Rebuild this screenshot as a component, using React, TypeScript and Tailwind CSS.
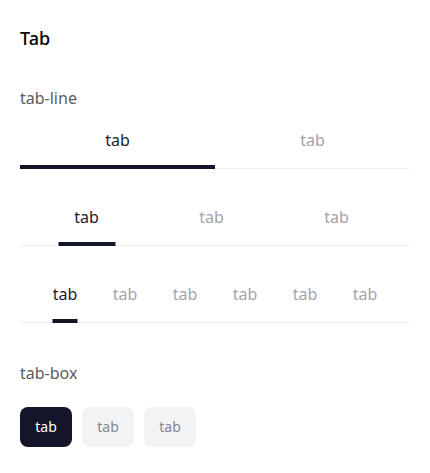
import { useState } from "react";

const font = { fontFamily: '"Noto Sans", "Open Sans", sans-serif' };

// Two equal tabs, indicator spans the whole tab
function LineTabsFull() {
    const [active, setActive] = useState(0);
    return (
        <div className="flex h-[57px] border-b border-[#f0f0f2]">
            {["tab", "tab"].map((t, i) => (
                <button
                    key={i}
                    onClick={() => setActive(i)}
                    className={`relative flex-1 flex items-center justify-center text-base ${active === i ? "text-[#1b1b2f]" : "text-[#a3a3ad]"}`}
                >
                    {t}
                    {active === i && <span className="absolute left-0 right-0 bottom-[-1px] h-[4px] bg-[#15152a]" />}
                </button>
            ))}
        </div>
    );
}

// Three tabs with a short indicator
function LineTabsShort() {
    const [active, setActive] = useState(0);
    return (
        <div className="flex h-[57px] pl-[4px] border-b border-[#f0f0f2]">
            {["tab", "tab", "tab"].map((t, i) => (
                <button
                    key={i}
                    onClick={() => setActive(i)}
                    className={`relative w-[125px] flex items-center justify-center text-base ${active === i ? "text-[#1b1b2f]" : "text-[#a3a3ad]"}`}
                >
                    {t}
                    {active === i && <span className="absolute left-1/2 -translate-x-1/2 w-[57px] bottom-[-1px] h-[4px] bg-[#15152a]" />}
                </button>
            ))}
        </div>
    );
}

// Six tabs, indicator as wide as the text
function LineTabsText() {
    const [active, setActive] = useState(0);
    return (
        <div className="flex h-[57px] pl-[15px] border-b border-[#f0f0f2]">
            {["tab", "tab", "tab", "tab", "tab", "tab"].map((t, i) => (
                <button
                    key={i}
                    onClick={() => setActive(i)}
                    className={`relative w-[60px] flex items-center justify-center text-base ${active === i ? "text-[#1b1b2f]" : "text-[#a3a3ad]"}`}
                >
                    {t}
                    {active === i && <span className="absolute left-1/2 -translate-x-1/2 w-[25px] bottom-[-1px] h-[4px] bg-[#15152a]" />}
                </button>
            ))}
        </div>
    );
}

function BoxTabs() {
    const [active, setActive] = useState(0);
    return (
        <div className="flex gap-[10px]">
            {["tab", "tab", "tab"].map((t, i) => (
                <button
                    key={i}
                    onClick={() => setActive(i)}
                    className={`w-[52px] h-[40px] rounded-[8px] text-sm ${active === i ? "bg-[#15152a] text-white" : "bg-[#f2f3f5] text-[#85858f]"}`}
                >
                    {t}
                </button>
            ))}
        </div>
    );
}

export default function App() {
    return (
        <div className="w-[430px] h-[473px] bg-white px-5 pt-[26px]" style={font}>
            <h1 className="text-[18px] leading-[24px] font-medium text-black">Tab</h1>

            <div className="mt-[37px] text-[16px] leading-[22px] text-[#5c5c5c]">tab-line</div>
            <div className="mt-[3px]">
                <LineTabsFull />
            </div>
            <div className="mt-[20px]">
                <LineTabsShort />
            </div>
            <div className="mt-[20px]">
                <LineTabsText />
            </div>

            <div className="mt-[39px] text-[16px] leading-[22px] text-[#5c5c5c]">tab-box</div>
            <div className="mt-[23px]">
                <BoxTabs />
            </div>
        </div>
    );
}
